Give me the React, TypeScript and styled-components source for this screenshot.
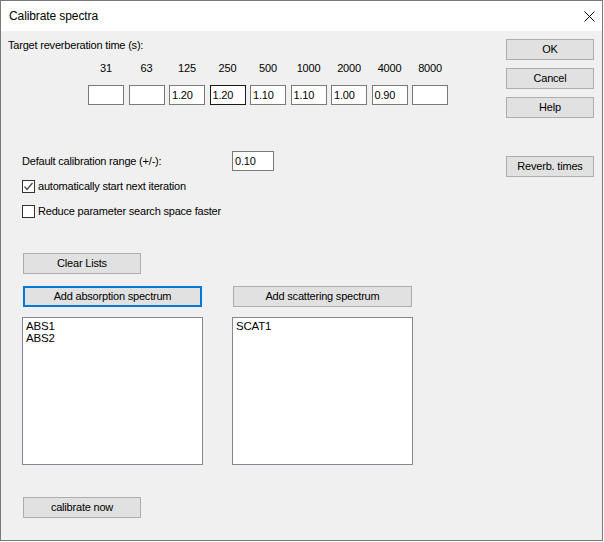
import React from "react";
import styled, { createGlobalStyle } from "styled-components";

const GlobalStyle = createGlobalStyle`
  html, body { margin: 0; padding: 0; background: #ffffff; }
  body {
    font-family: "Liberation Sans", Arial, sans-serif;
    font-size: 11px;
    letter-spacing: -0.2px;
    color: #000;
  }
  * { box-sizing: border-box; }
`;

const Window = styled.div`
  width: 603px;
  height: 541px;
  border: 1px solid #7a7a7a;
  display: flex;
  flex-direction: column;
  background: #f0f0f0;
`;

const TitleBar = styled.div`
  flex: none;
  height: 30px;
  background: #ffffff;
  display: flex;
  align-items: center;
  justify-content: space-between;
  padding: 0 7px 0 8px;
  font-size: 12px;
  letter-spacing: -0.1px;
`;

const CloseIcon = styled.svg`
  width: 11px;
  height: 11px;
  display: block;
`;

const Body = styled.div`
  flex: 1;
  display: flex;
`;

const MainCol = styled.div`
  flex: 1;
  display: flex;
  flex-direction: column;
  align-items: flex-start;
  padding-left: 7px;
`;

const SideCol = styled.div`
  width: 88px;
  margin-right: 8px;
  padding-top: 8px;
  display: flex;
  flex-direction: column;
  gap: 8px;
`;

const Heading = styled.div`
  margin-top: 7px;
  line-height: 15px;
`;

const FreqGrid = styled.div`
  margin-top: 8px;
  margin-left: 80px;
  display: grid;
  grid-template-columns: repeat(9, 36px);
  grid-template-rows: 15px 20px;
  column-gap: 4.5px;
  row-gap: 9px;
`;

const FreqLabel = styled.div`
  text-align: center;
  line-height: 15px;
`;

const ValueBox = styled.div<{ $focused?: boolean }>`
  height: 20px;
  background: #ffffff;
  border: 1px solid ${(p) => (p.$focused ? "#1a1a1a" : "#7a7a7a")};
  padding-left: 2px;
  line-height: 18px;
`;

const RangeRow = styled.div`
  margin-top: 46px;
  margin-left: 14px;
  display: flex;
  align-items: center;
`;

const RangeLabel = styled.div`
  width: 210px;
  line-height: 15px;
`;

const RangeInput = styled(ValueBox)`
  width: 42px;
`;

const CheckRow = styled.div<{ $top: number }>`
  margin-top: ${(p) => p.$top}px;
  margin-left: 14px;
  display: flex;
  align-items: center;
  gap: 3px;
  height: 13px;
  line-height: 13px;
`;

const CheckBox = styled.div`
  width: 13px;
  height: 13px;
  border: 1px solid #333333;
  background: #ffffff;
  display: flex;
  align-items: center;
  justify-content: center;
`;

const Button = styled.div<{ $width?: number; $focused?: boolean }>`
  width: ${(p) => p.$width ?? 88}px;
  height: 21px;
  background: #e1e1e1;
  border: ${(p) => (p.$focused ? "2px solid #0078d7" : "1px solid #adadad")};
  display: flex;
  align-items: center;
  justify-content: center;
  line-height: 15px;
  flex: none;
`;

const ClearButtonWrap = styled.div`
  margin-top: 35px;
  margin-left: 15px;
`;

const AddRow = styled.div`
  margin-top: 12px;
  margin-left: 15px;
  display: flex;
  gap: 31px;
`;

const ListsRow = styled.div`
  margin-top: 10px;
  margin-left: 14px;
  display: flex;
  gap: 29px;
`;

const ListBox = styled.div`
  width: 181px;
  height: 148px;
  background: #ffffff;
  border: 1px solid #828790;
  padding: 2px 3px;
`;

const ListItem = styled.div`
  line-height: 12px;
  font-size: 11.5px;
`;

const CalibrateWrap = styled.div`
  margin-top: 32px;
  margin-left: 15px;
`;

const SideGap = styled.div`
  height: 22px;
`;

const freqs = ["31", "63", "125", "250", "500", "1000", "2000", "4000", "8000"];
const values = ["", "", "1.20", "1.20", "1.10", "1.10", "1.00", "0.90", ""];

export default function App() {
  return (
    <>
      <GlobalStyle />
      <Window>
        <TitleBar>
          <span>Calibrate spectra</span>
          <CloseIcon viewBox="0 0 11 11">
            <path d="M0.5 0.5 L10.5 10.5 M10.5 0.5 L0.5 10.5" stroke="#000" strokeWidth="1" fill="none" />
          </CloseIcon>
        </TitleBar>
        <Body>
          <MainCol>
            <Heading>Target reverberation time (s):</Heading>
            <FreqGrid>
              {freqs.map((f) => (
                <FreqLabel key={f}>{f}</FreqLabel>
              ))}
              {values.map((v, i) => (
                <ValueBox key={i} $focused={i === 3}>
                  {v}
                </ValueBox>
              ))}
            </FreqGrid>
            <RangeRow>
              <RangeLabel>Default calibration range (+/-):</RangeLabel>
              <RangeInput>0.10</RangeInput>
            </RangeRow>
            <CheckRow $top={9}>
              <CheckBox>
                <svg width="11" height="11" viewBox="0 0 11 11">
                  <path d="M1.5 5.5 L4 8.5 L9.5 2" stroke="#444" strokeWidth="1.2" fill="none" />
                </svg>
              </CheckBox>
              <span>automatically start next iteration</span>
            </CheckRow>
            <CheckRow $top={12}>
              <CheckBox />
              <span>Reduce parameter search space faster</span>
            </CheckRow>
            <ClearButtonWrap>
              <Button $width={118}>Clear Lists</Button>
            </ClearButtonWrap>
            <AddRow>
              <Button $width={179} $focused>
                Add absorption spectrum
              </Button>
              <Button $width={179}>Add scattering spectrum</Button>
            </AddRow>
            <ListsRow>
              <ListBox>
                <ListItem>ABS1</ListItem>
                <ListItem>ABS2</ListItem>
              </ListBox>
              <ListBox>
                <ListItem>SCAT1</ListItem>
              </ListBox>
            </ListsRow>
            <CalibrateWrap>
              <Button $width={118}>calibrate now</Button>
            </CalibrateWrap>
          </MainCol>
          <SideCol>
            <Button>OK</Button>
            <Button>Cancel</Button>
            <Button>Help</Button>
            <SideGap />
            <Button>Reverb. times</Button>
          </SideCol>
        </Body>
      </Window>
    </>
  );
}
